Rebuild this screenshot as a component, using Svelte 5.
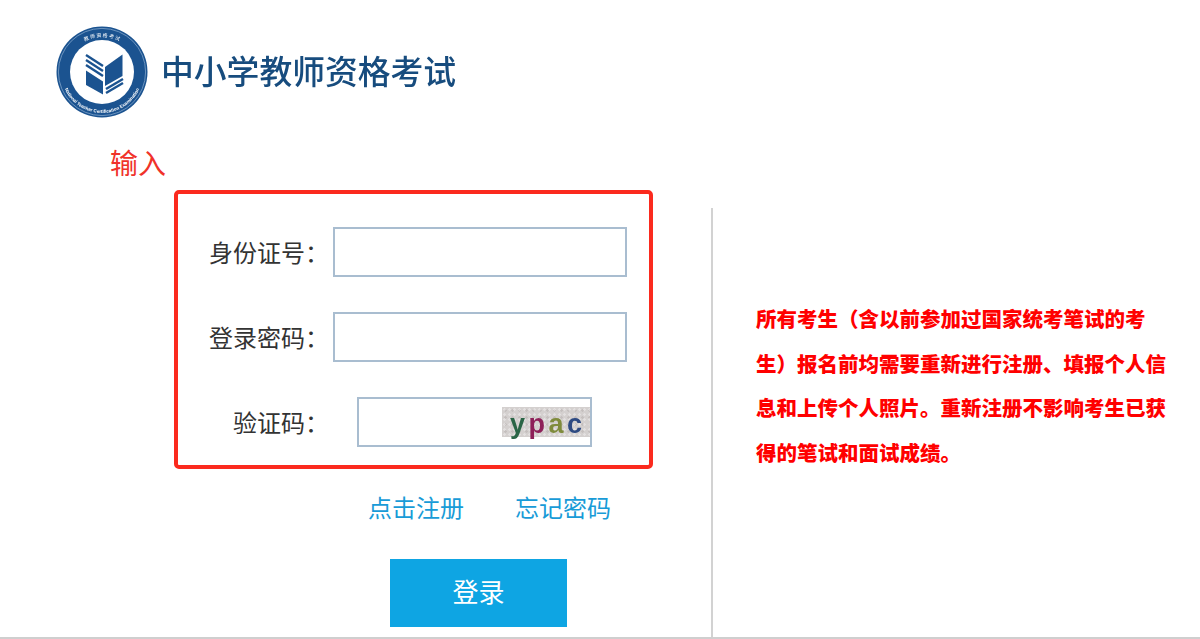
<script lang="ts">
  const fields = [
    { label: '身份证号：', type: 'text' },
    { label: '登录密码：', type: 'password' }
  ];
  const captcha = [
    { ch: 'y', color: '#2a6546' },
    { ch: 'p', color: '#8e2059' },
    { ch: 'a', color: '#7f8b3c' },
    { ch: 'c', color: '#2e4a82' }
  ];
</script>

<div class="page">
  <header class="logo">
    <svg class="seal" viewBox="56 26 92 92" width="92" height="92" aria-hidden="true">
      <defs>
        <path id="arc-top" d="M 65 74 A 37 37 0 0 1 139 74" />
        <path id="arc-bottom" d="M 61 72 A 41 41 0 0 0 143 72" />
      </defs>
      <circle cx="102" cy="72" r="45.5" fill="#1b5390" />
      <circle cx="102" cy="72" r="43.6" fill="none" stroke="#8fb0d2" stroke-width="0.7" />
      <circle cx="102" cy="72" r="32" fill="#fff" />
      <text class="ring cn"><textPath href="#arc-top" startOffset="50%" text-anchor="middle">教 师 资 格 考 试</textPath></text>
      <text class="ring en"><textPath href="#arc-bottom" startOffset="50%" text-anchor="middle">National Teacher Certification Examination</textPath></text>
      <polygon points="105,67 122.5,54.5 122.5,76 105,86" fill="#1b5390" />
      <polygon points="86,70.5 103,81.5 103,94.5 86,85" fill="#1b5390" />
      <g stroke="#1b5390" stroke-width="2.4" fill="none">
        <path d="M86 55 L103 66" />
        <path d="M86 60 L103 71" />
        <path d="M86 65 L103 76" />
        <path d="M106 93 L123 83" />
        <path d="M106 89 L123 79" />
      </g>
    </svg>
    <span class="title">中小学教师资格考试</span>
  </header>

  <div class="content">
    <section class="left">
      <div class="note">输入</div>
      <form class="box">
        {#each fields as f}
          <div class="row">
            <label class="label" for={f.type}>{f.label}</label>
            <input id={f.type} class="input" type={f.type} />
          </div>
        {/each}
        <div class="row">
          <label class="label" for="code">验证码：</label>
          <div class="code">
            <input id="code" class="code-input" type="text" />
            <span class="captcha">
              {#each captcha as c}
                <b style="color:{c.color}">{c.ch}</b>
              {/each}
            </span>
          </div>
        </div>
      </form>
      <div class="links">
        <a href="#reg">点击注册</a>
        <a href="#pwd">忘记密码</a>
      </div>
      <button class="submit" type="button">登录</button>
    </section>

    <aside class="right">
      <p>所有考生（含以前参加过国家统考笔试的考生）报名前均需要重新进行注册、填报个人信息和上传个人照片。重新注册不影响考生已获得的笔试和面试成绩。</p>
    </aside>
  </div>
</div>

<style>
  :global(body) {
    margin: 0;
    background: #fff;
  }
  .page {
    width: 1200px;
    height: 639px;
    box-sizing: border-box;
    border-bottom: 2px solid #cfcfcf;
    display: flex;
    flex-direction: column;
    overflow: hidden;
    font-family: "Noto Sans CJK SC", "Liberation Sans", sans-serif;
  }
  .logo {
    display: flex;
    align-items: center;
    gap: 13px;
    height: 92px;
    padding: 26px 0 0 56px;
    flex-shrink: 0;
    filter: blur(0.6px);
  }
  .seal {
    display: block;
  }
  .ring {
    fill: #fff;
  }
  .ring.cn {
    font-size: 5px;
  }
  .ring.en {
    font-size: 4.6px;
    font-family: "Liberation Sans", sans-serif;
    font-weight: 700;
  }
  .title {
    font-size: 32.8px;
    line-height: 1;
    font-weight: 500;
    color: #174c7e;
    white-space: nowrap;
    margin-top: -4px;
  }
  .content {
    flex: 1;
    display: flex;
    min-height: 0;
  }
  .left {
    width: 711px;
    flex-shrink: 0;
  }
  .note {
    margin: 25px 0 0 110px;
    height: 47px;
    font-size: 28px;
    line-height: 38px;
    color: #f0322a;
  }
  .box {
    width: 479px;
    height: 279px;
    box-sizing: border-box;
    margin-left: 174px;
    border: 4px solid #fb2a1e;
    border-radius: 5px;
    padding: 33px 0 0;
    display: flex;
    flex-direction: column;
    gap: 35px;
  }
  .row {
    display: flex;
    align-items: center;
    height: 50px;
  }
  .label {
    width: 151px;
    flex-shrink: 0;
    text-align: right;
    font-size: 24px;
    line-height: 46px;
    color: #333;
  }
  .input {
    width: 294px;
    height: 50px;
    margin-left: 4px;
    box-sizing: border-box;
    border: 2px solid #a9bdd0;
    background: #fff;
    outline: none;
    padding: 0 8px;
  }
  .code {
    width: 235px;
    height: 50px;
    margin-left: 28px;
    box-sizing: border-box;
    border: 2px solid #a9bdd0;
    display: flex;
    align-items: center;
  }
  .code-input {
    flex: 1;
    min-width: 0;
    height: 100%;
    border: 0;
    outline: none;
    padding: 0;
  }
  .captcha {
    width: 88px;
    height: 30px;
    flex-shrink: 0;
    display: flex;
    justify-content: space-between;
    align-items: center;
    padding: 0 8px;
    box-sizing: border-box;
    background-color: #d4d0cf;
    background-image:
      radial-gradient(rgba(255, 255, 255, 0.35) 1px, transparent 1.5px),
      radial-gradient(rgba(150, 140, 140, 0.25) 1px, transparent 1.5px);
    background-size: 5px 5px, 7px 7px;
    font-family: "Liberation Sans", sans-serif;
    font-size: 27px;
    line-height: 30px;
    filter: blur(0.7px);
  }
  .captcha b {
    font-weight: 700;
    position: relative;
    top: 2px;
  }
  .links {
    display: flex;
    gap: 51px;
    margin: 20px 0 0 368px;
    font-size: 24px;
    line-height: 36px;
  }
  .links a {
    color: #189bd7;
    text-decoration: none;
  }
  .submit {
    display: block;
    width: 177px;
    height: 68px;
    margin: 34px 0 0 390px;
    padding: 0 0 5px;
    border: 0;
    background: #0ea5e3;
    color: #fff;
    font-family: inherit;
    font-size: 26px;
  }
  .right {
    flex: 1;
    margin-top: 90px;
    border-left: 2px solid #d2d2d2;
    padding: 88px 0 0 43px;
  }
  .right p {
    margin: 0;
    width: 415px;
    font-size: 20.5px;
    line-height: 44.5px;
    font-weight: 900;
    color: #f00;
  }
</style>
